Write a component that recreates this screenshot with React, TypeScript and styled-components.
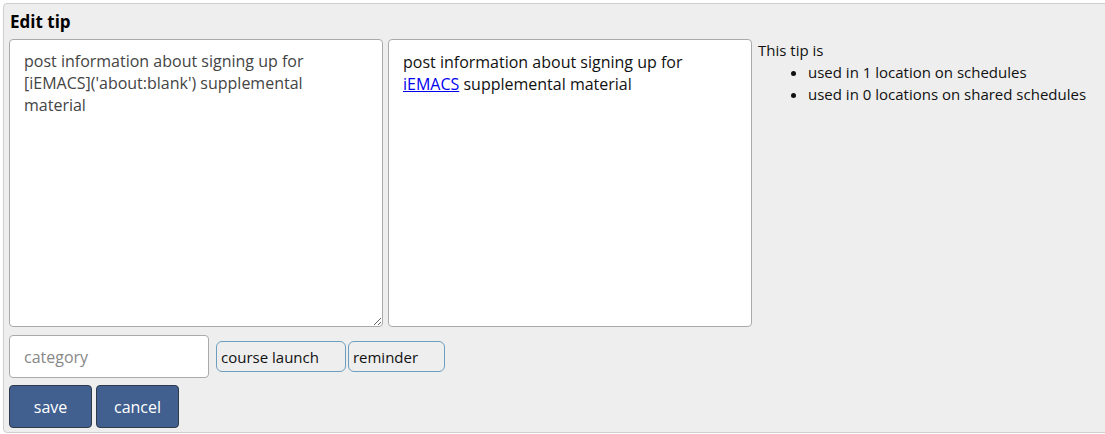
import React from "react";
import styled, { createGlobalStyle } from "styled-components";

const Global = createGlobalStyle`
  html, body { margin: 0; padding: 0; background: #ffffff; }
  body { font-family: "Open Sans", "Noto Sans", "Liberation Sans", sans-serif; color: #111; }
`;

const Panel = styled.section`
  margin: 3px 0 0 3px;
  width: 1110px;
  height: 430px;
  box-sizing: border-box;
  background: #eeeeee;
  border: 1px solid #cfcfcf;
  border-radius: 4px;
  padding: 6px 5px 0 5px;
`;

const Title = styled.h2`
  margin: 0 0 0 1px;
  font-size: 17px;
  font-weight: 700;
  line-height: 24px;
  color: #000;
`;

const EditorRow = styled.div`
  display: flex;
  align-items: flex-start;
  gap: 5px;
  margin-top: 5px;
`;

const TextArea = styled.textarea`
  width: 374px;
  height: 288px;
  box-sizing: border-box;
  border: 1px solid #aaaaaa;
  border-radius: 4px;
  background: #fff;
  padding: 10px 14px;
  font-family: inherit;
  font-size: 16px;
  line-height: 22px;
  color: #444;
  resize: both;
  outline: none;
`;

const Preview = styled.div`
  width: 364px;
  height: 288px;
  box-sizing: border-box;
  border: 1px solid #aaaaaa;
  border-radius: 4px;
  background: #fff;
  padding: 11px 14px;
  font-size: 16px;
  line-height: 22px;
  color: #111;
`;

const Link = styled.a`
  color: #0000ee;
  text-decoration: underline;
`;

const Info = styled.div`
  margin-left: 1px;
  font-size: 15px;
  line-height: 22px;
  color: #111;
`;

const InfoList = styled.ul`
  margin: 0;
  padding-left: 50px;
  list-style: disc;
`;

const CategoryRow = styled.div`
  display: flex;
  align-items: center;
  margin-top: 8px;
`;

const CategoryInput = styled.input`
  width: 200px;
  height: 43px;
  box-sizing: border-box;
  border: 1px solid #aaaaaa;
  border-radius: 4px;
  background: #fff;
  padding: 0 14px;
  font-family: inherit;
  font-size: 16px;
  color: #111;
  outline: none;
  margin-right: 7px;
  &::placeholder { color: #888; }
`;

const Tag = styled.span`
  display: inline-flex;
  align-items: center;
  height: 31px;
  box-sizing: border-box;
  border: 1px solid #6c9fbf;
  border-radius: 6px;
  padding: 0 26px 0 4px;
  margin-right: 2px;
  font-size: 15px;
  color: #111;
`;

const ButtonRow = styled.div`
  display: flex;
  gap: 4px;
  margin-top: 7px;
`;

const Button = styled.button<{ $w: number }>`
  width: ${(p) => p.$w}px;
  height: 43px;
  box-sizing: border-box;
  background: #415f8f;
  border: 1px solid #2f3a4a;
  border-radius: 4px;
  color: #fff;
  font-family: inherit;
  font-size: 16px;
  cursor: pointer;
`;

export default function App() {
  return (
    <>
      <Global />
      <Panel>
        <Title>Edit tip</Title>
        <EditorRow>
          <TextArea
            spellCheck={false}
            defaultValue={"post information about signing up for [iEMACS]('about:blank') supplemental material"}
          />
          <Preview>
            post information about signing up for <Link href="about:blank">iEMACS</Link> supplemental material
          </Preview>
          <Info>
            This tip is
            <InfoList>
              <li>used in 1 location on schedules</li>
              <li>used in 0 locations on shared schedules</li>
            </InfoList>
          </Info>
        </EditorRow>
        <CategoryRow>
          <CategoryInput placeholder="category" />
          <Tag>course launch</Tag>
          <Tag>reminder</Tag>
        </CategoryRow>
        <ButtonRow>
          <Button $w={83}>save</Button>
          <Button $w={83}>cancel</Button>
        </ButtonRow>
      </Panel>
    </>
  );
}
